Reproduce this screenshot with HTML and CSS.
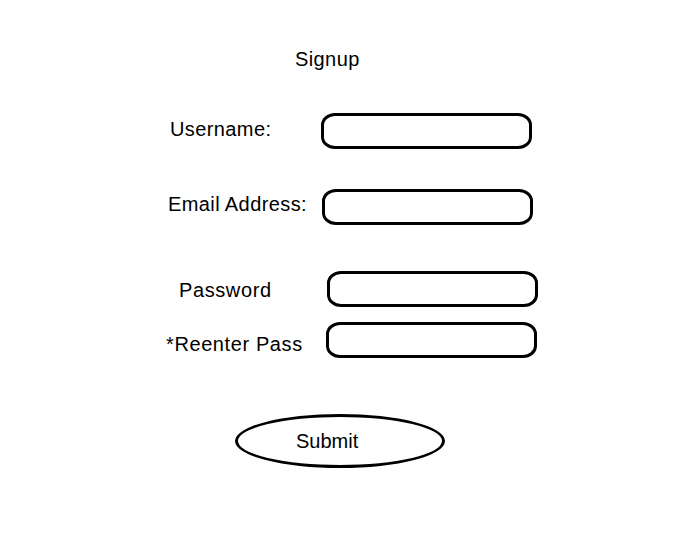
FILE: index.html
```html
<!DOCTYPE html>
<html lang="en">
<head>
    <meta charset="UTF-8">
    <meta name="viewport" content="width=device-width, initial-scale=1.0">
    <title>Signup</title>
    <link rel="stylesheet" href="styles.css">
</head>
<body>

    <section class="signup">
        <h1 class="title">Signup</h1>

        <!-- campi del form -->
        <div class="row row-user">
            <label for="username">Username:</label>
            <input type="text" id="username" class="field">
        </div>
        <div class="row row-email">
            <label for="email">Email Address:</label>
            <input type="text" id="email" class="field">
        </div>
        <div class="row row-pass">
            <label for="password">Password</label>
            <input type="password" id="password" class="field">
        </div>
        <div class="row row-repass">
            <label for="repass">*Reenter Pass</label>
            <input type="password" id="repass" class="field">
        </div>

        <div class="actions">
            <button class="submit-btn">Submit</button>
        </div>
    </section>

</body>
</html>
```

FILE: styles.css
```css
body {
    font-family: "Liberation Sans", Arial, sans-serif;
    font-size: 20px;
    letter-spacing: 0.4px;
    background-color: #ffffff;
    color: #000000;
    margin: 0;
    padding: 0;
}
.signup {
    padding-top: 48px;
}
.title {
    font-size: 20px;
    font-weight: normal;
    line-height: 23px;
    margin: 0;
    padding-left: 295px;
}
.row {
    display: flex;
    align-items: flex-start;
    height: 36px;
}
.row label {
    display: block;
    line-height: 23px;
}
.field {
    box-sizing: border-box;
    width: 211px;
    height: 36px;
    border: 3px solid #000000;
    border-radius: 14px / 12px;
    background: #ffffff;
    padding: 0 10px;
    font: inherit;
    outline: none;
}
/* righe disegnate a mano: ognuna ha il suo scostamento */
.row-user {
    margin-top: 42px;
    padding-left: 170px;
}
.row-user label {
    width: 151px;
    margin-top: 5px;
}
.row-email {
    margin-top: 40px;
    padding-left: 168px;
}
.row-email label {
    width: 154px;
    margin-top: 4px;
}
.row-pass {
    margin-top: 46px;
    padding-left: 179px;
}
.row-pass label {
    width: 148px;
    margin-top: 8px;
    letter-spacing: 0.6px;
}
.row-repass {
    margin-top: 15px;
    padding-left: 166px;
}
.row-repass label {
    width: 160px;
    margin-top: 11px;
    letter-spacing: 0.6px;
}
.actions {
    margin-top: 56px;
    padding-left: 235px;
}
.submit-btn {
    box-sizing: border-box;
    width: 210px;
    height: 54px;
    border: 3px solid #000000;
    border-radius: 50%;
    background: #ffffff;
    color: #000000;
    font: inherit;
    line-height: 23px;
    text-align: left;
    padding: 0 0 0 58px;
    cursor: pointer;
}
```
